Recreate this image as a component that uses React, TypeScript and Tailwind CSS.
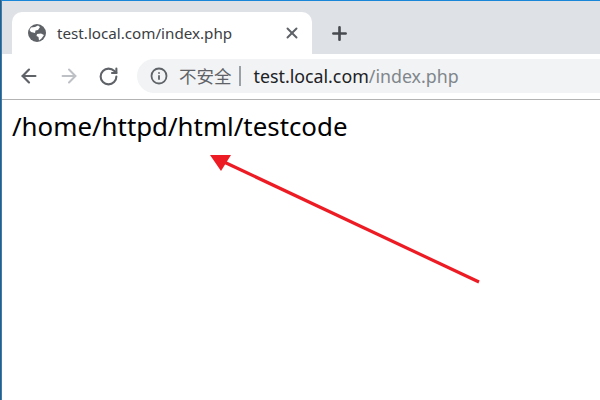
// Browser window screenshot: Chrome tab strip, toolbar, page text and a red annotation arrow
import { ArrowLeft, ArrowRight, RotateCw, Info, X, Plus } from 'lucide-react'

const font = { fontFamily: '"Noto Sans", "Noto Sans CJK SC", sans-serif' }

function Globe() {
  return (
    <svg width="18" height="18" viewBox="0 0 18 18" className="shrink-0">
      <circle cx="9" cy="9" r="9" fill="#5f6368" />
      <path d="M3 3.5 L7 3 L10 1.5 L12 3 L10 6 L7.5 6.5 L7 9 L3 8 L1.5 6 Z" fill="#fff" />
      <path d="M9 10 L13 9.5 L16 11 L13.5 14.5 L11 16.5 L10.5 13 L8.5 12 Z" fill="#fff" />
    </svg>
  )
}

export default function App() {
  return (
    <div className="relative w-[600px] h-[400px] overflow-hidden bg-white flex" style={font}>
      {/* desktop edge + window border */}
      <div className="w-px bg-[#4a5560] shrink-0" />
      <div className="w-px bg-[#1a86d8] shrink-0" />

      <div className="flex-1 flex flex-col min-w-0">
        <div className="h-px bg-[#1a86d8]" />

        {/* Tab strip */}
        <div className="h-[53px] bg-[#dee1e6] pt-[11px] pl-[10px] flex">
          <div className="w-[300px] h-[42px] bg-white rounded-t-[10px] flex items-center pl-[16px] pr-[11px]">
            <Globe />
            <span className="ml-[11px] text-[15.2px] text-[#3c4043] whitespace-nowrap">test.local.com/index.php</span>
            <X size={18} strokeWidth={2.6} className="ml-auto text-[#5f6368]" />
          </div>
          <div className="w-[54px] h-[42px] flex items-center justify-center">
            <Plus size={21} strokeWidth={3} className="text-[#474b50]" />
          </div>
        </div>

        {/* Toolbar */}
        <div className="h-[45px] pb-px bg-white flex items-center">
          <div className="w-[135px] flex items-center shrink-0 pl-[16px]">
            <ArrowLeft size={22} strokeWidth={2.4} className="text-[#5f6368]" />
            <ArrowRight size={22} strokeWidth={2.2} className="ml-[18px] text-[#bdc1c6]" />
            <RotateCw size={21} strokeWidth={2.4} className="ml-[18px] text-[#5f6368]" />
          </div>
          <div className="flex-1 h-[34px] bg-[#f1f3f4] rounded-l-[17px] flex items-center pl-[13px] whitespace-nowrap">
            <Info size={18} strokeWidth={2.4} className="text-[#5f6368]" />
            <span className="ml-[11px] text-[17.5px] text-[#5f6368]">不安全</span>
            <span className="ml-[7px] w-[2px] h-[20px] bg-[#9aa0a6]" />
            <span className="ml-[13px] text-[17.8px] text-[#202124]">
              test.local.com<span className="text-[#80868b]">/index.php</span>
            </span>
          </div>
        </div>

        <div className="h-px bg-[#b3b3b3]" />

        {/* Page */}
        <div className="flex-1 pl-[10px] pt-[9px] text-[25.85px] leading-[35px] text-black whitespace-nowrap">
          /home/httpd/html/testcode
        </div>
      </div>

      {/* Annotation arrow */}
      <svg className="absolute left-0 top-0" width="600" height="400" viewBox="0 0 600 400">
        <line x1="479" y1="282" x2="224" y2="162" stroke="#ed1c24" strokeWidth="3.2" />
        <polygon points="210,155 231,155 221,171" fill="#ed1c24" />
      </svg>
    </div>
  )
}
